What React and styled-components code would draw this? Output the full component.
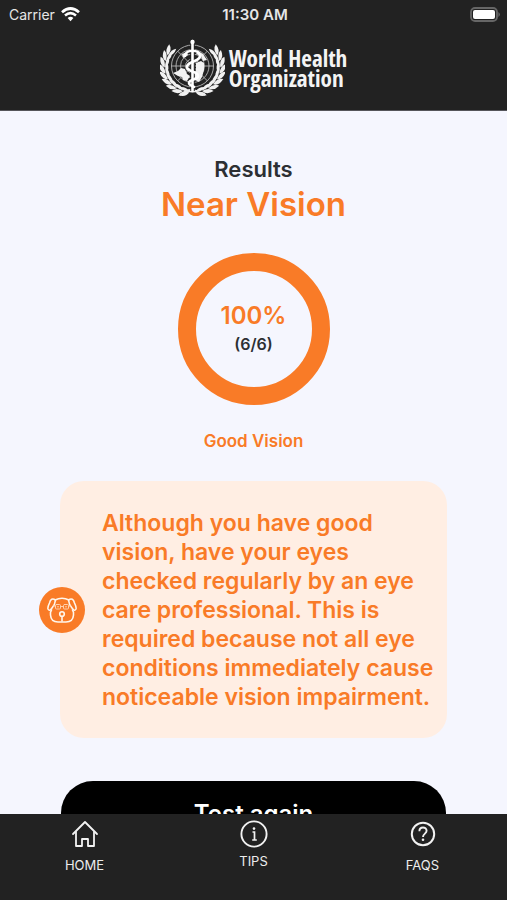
import React from "react";
import styled, { createGlobalStyle } from "styled-components";

const orange = "#f97b27";
const ink = "#222222";

const GlobalStyle = createGlobalStyle`
  *, *::before, *::after { box-sizing: border-box; }
  body {
    margin: 0;
    background: #f5f6fe;
    font-family: Inter, "Liberation Sans", sans-serif;
  }
  h1, h2, p { margin: 0; }
`;

const Screen = styled.div`
  display: flex;
  flex-direction: column;
  height: 100vh;
  background: #f5f6fe;
`;

const Header = styled.header`
  flex: none;
  background: ${ink};
  color: #fff;
  padding-bottom: 14px;
  border-bottom: 1px solid #55555a;
`;

const StatusBar = styled.div`
  display: grid;
  grid-template-columns: 1fr auto 1fr;
  align-items: center;
  height: 28px;
  padding: 0 6px 0 9px;
  font-size: 14px;
  color: #e6e6e6;
`;

const Carrier = styled.span`
  display: flex;
  align-items: center;
  gap: 6px;
`;

const Clock = styled.time`
  font-size: 15px;
  font-weight: 600;
`;

const BatteryIcon = styled.svg`
  justify-self: end;
`;

const Brand = styled.div`
  display: flex;
  justify-content: center;
  align-items: center;
  gap: 4px;
  height: 68px;
  padding-top: 12px;
`;

const BrandName = styled.span`
  font-family: "Open Sans Condensed", "Liberation Sans Narrow", "Noto Sans", sans-serif;
  font-size: 23px;
  font-weight: 700;
  line-height: 20px;
  color: #f4f4f4;
`;

const Content = styled.main`
  flex: 1;
  min-height: 0;
  overflow: hidden;
  display: flex;
  flex-direction: column;
  align-items: center;
  padding: 44px 60px 0;
`;

const Overline = styled.p`
  font-size: 22px;
  line-height: 28px;
  font-weight: 600;
  color: #2c2f33;
`;

const Title = styled.h1`
  font-size: 33px;
  line-height: 42px;
  font-weight: 600;
  color: ${orange};
`;

const Ring = styled.div`
  flex: none;
  display: flex;
  flex-direction: column;
  align-items: center;
  justify-content: center;
  gap: 2px;
  width: 152px;
  height: 152px;
  margin-top: 28px;
  border: 18px solid ${orange};
  border-radius: 50%;
`;

const Percent = styled.span`
  font-size: 24px;
  line-height: 28px;
  font-weight: 600;
  color: ${orange};
`;

const Ratio = styled.span`
  font-size: 16px;
  line-height: 24px;
  font-weight: 600;
  color: #2c2f33;
`;

const Verdict = styled.h2`
  margin-top: 24px;
  font-size: 17px;
  line-height: 24px;
  font-weight: 600;
  color: ${orange};
`;

const Advice = styled.section`
  flex: none;
  position: relative;
  align-self: stretch;
  margin-top: 28px;
  padding: 28px 12px 26px 42px;
  border-radius: 24px;
  background: #ffeee3;
`;

const AdviceText = styled.p`
  font-size: 23px;
  line-height: 29px;
  font-weight: 600;
  color: ${orange};
`;

const Mascot = styled.span`
  position: absolute;
  left: -21px;
  top: 50%;
  transform: translateY(-50%);
  display: grid;
  place-items: center;
  width: 46px;
  height: 46px;
  border-radius: 50%;
  background: ${orange};
`;

const PrimaryButton = styled.button`
  flex: none;
  width: calc(100% - 2px);
  height: 66px;
  margin-top: 43px;
  border: 0;
  border-radius: 32px;
  background: #000;
  color: #fff;
  font: 600 24px/28px Inter, "Liberation Sans", sans-serif;
`;

const TabBar = styled.nav`
  flex: none;
  display: grid;
  grid-template-columns: repeat(3, 1fr);
  height: 86px;
  padding-top: 6px;
  background: ${ink};
`;

const Tab = styled.a`
  display: flex;
  flex-direction: column;
  align-items: center;
  gap: ${(p) => (p.$tight ? "5px" : "9px")};
  font-size: 13px;
  line-height: 16px;
  color: #ececec;
  text-decoration: none;
`;

const leaves = Array.from({ length: 9 }, (_, i) => {
  const degrees = 104 + i * 14;
  const angle = (degrees * Math.PI) / 180;
  return {
    x: 32 + 27 * Math.cos(angle),
    y: 28 + 25 * Math.sin(angle),
    turn: degrees + 90,
  };
});

function Branch() {
  return (
    <g fill="#f2f2f2">
      {leaves.map((l) => (
        <g key={l.turn} transform={`translate(${l.x} ${l.y}) rotate(${l.turn})`}>
          <path d="M-4 0Q-2-6 6-5.500Q4 0-4 0Z" />
          <path d="M-4 .4Q0 5 6.500 2.800Q3-1-4 .4Z" />
        </g>
      ))}
    </g>
  );
}

function Emblem() {
  return (
    <svg width="65" height="58" viewBox="0 0 65 58" fill="none" aria-hidden="true">
      <Branch />
      <g transform="translate(65 0) scale(-1 1)">
        <Branch />
      </g>
      <path d="M20 56Q27 50 32.500 51T45 56M25 51Q31 54 40 51M40 51Q34 54 25 51" stroke="#eee" strokeWidth="1.800" />
      <g stroke="#b8b8b8" strokeWidth=".9">
        <circle cx="32.500" cy="27" r="21" />
        <circle cx="32.500" cy="27" r="16.500" />
        <circle cx="32.500" cy="27" r="12" />
        <circle cx="32.500" cy="27" r="7" />
        <path d="M11.500 27h42M32.500 6v42M17.500 12l30 30M47.500 12l-30 30" />
      </g>
      <g fill="#f2f2f2">
        <path d="M13 34l5-2 3-3 4 1 2 5 3 2-3 5-4-1-1-3-4-1z" />
        <path d="M36 24l5-2 3 2v7l-2 7-3 5-4-2-1-6 2-4z" />
        <path d="M38 12l5 3 4 6-4 1-2-5-5-2zM22 15l5-2 1 3-5 3z" />
      </g>
      <path d="M32.500 2v50" stroke={ink} strokeWidth="4.500" />
      <path d="M32.500 2v50" stroke="#fff" strokeWidth="2.600" strokeLinecap="round" />
      <circle cx="32.500" cy="3" r="2.200" fill="#fff" />
      <path
        d="M25 17c0-7 15-7 15 0 0 6-13 5-13 11 0 5 11 4 11 9 0 4-9 3-9 7 0 2 3 3 5 4"
        stroke="#fff"
        strokeWidth="2.600"
        strokeLinecap="round"
      />
    </svg>
  );
}

function WifiIcon() {
  return (
    <svg width="19" height="15" viewBox="0 0 19 15" fill="none" stroke="#fff" aria-hidden="true">
      <path d="M1 5.300Q9.500-2.300 18 5.300" strokeWidth="2.700" />
      <path d="M4 8.500Q9.500 3.700 15 8.500" strokeWidth="2.500" />
      <path d="M6.600 11.100Q9.500 8.500 12.400 11.100L9.500 14.200Z" fill="#fff" stroke="none" />
    </svg>
  );
}

function Battery() {
  return (
    <BatteryIcon width="31" height="15" viewBox="0 0 31 15" aria-label="Battery full">
      <rect x="1" y="1" width="26" height="13" rx="4" fill="none" stroke="#666" strokeWidth="1.800" />
      <rect x="3" y="3" width="22" height="9" rx="2" fill="#fff" />
      <path d="M28.500 5Q31 7.500 28.500 10Z" fill="#777" />
    </BatteryIcon>
  );
}

function DogIcon() {
  return (
    <svg width="30" height="28" viewBox="0 0 30 28" fill="none" stroke="#fff6ec" strokeWidth="1.600" strokeLinecap="round" strokeLinejoin="round" aria-hidden="true">
      <path d="M8 4Q15 .5 22 4" />
      <path d="M8.500 4Q4 1 2.500 7Q.5 11 1 13Q2.500 16 5 12Q8 9 8.500 4Z" />
      <path d="M21.500 4Q26 1 27.500 7Q29.500 11 29 13Q27.500 16 25 12Q22 9 21.500 4Z" />
      <path d="M4.500 14Q3 16 3.500 19Q4 26 11 26H19Q26 26 26.500 19Q27 16 25.500 14" />
      <circle cx="15" cy="18" r="2.300" />
      <path d="M15 20.500v4.500" />
      <g stroke="#ffd0ad" strokeWidth="1">
        <rect x="8.500" y="8.500" width="5" height="4.500" rx="1" />
        <rect x="16.500" y="8.500" width="5" height="4.500" rx="1" />
        <path d="M13.500 10.500h3M10.500 10.800h1M18.500 10.800h1M6.500 10h2M21.500 10h2" />
      </g>
    </svg>
  );
}

function HomeIcon() {
  return (
    <svg width="28" height="28" viewBox="0 0 28 28" fill="none" stroke="#f2f2f2" strokeWidth="1.800" strokeLinecap="round" strokeLinejoin="round" aria-hidden="true">
      <path d="M2 14L14 2l12 12" />
      <path d="M5 12v14h6v-7h6v7h6V12" />
    </svg>
  );
}

function TipsIcon() {
  return (
    <svg width="28" height="28" viewBox="0 0 28 28" fill="none" stroke="#f2f2f2" aria-hidden="true">
      <circle cx="14" cy="14" r="12.600" strokeWidth="1.900" />
      <path d="M12.500 12h2v8M12.200 20h4.600" strokeWidth="1.700" />
      <circle cx="14" cy="8.600" r="1.300" fill="#f2f2f2" stroke="none" />
    </svg>
  );
}

function FaqIcon() {
  return (
    <svg width="28" height="28" viewBox="0 0 28 28" fill="none" stroke="#f2f2f2" aria-hidden="true">
      <circle cx="14" cy="14" r="11.200" strokeWidth="2" />
      <path d="M10.400 11.200c0-5 7.200-4.700 7.200-.4 0 2.800-3.600 2.900-3.600 6.200" strokeWidth="1.900" />
      <circle cx="14" cy="19.800" r="1.300" fill="#f2f2f2" stroke="none" />
    </svg>
  );
}

export default function App() {
  return (
    <Screen>
      <GlobalStyle />
      <Header>
        <StatusBar>
          <Carrier>
            Carrier
            <WifiIcon />
          </Carrier>
          <Clock>11:30 AM</Clock>
          <Battery />
        </StatusBar>
        <Brand>
          <Emblem />
          <BrandName>
            World Health
            <br />
            Organization
          </BrandName>
        </Brand>
      </Header>
      <Content>
        <Overline>Results</Overline>
        <Title>Near Vision</Title>
        <Ring>
          <Percent>100%</Percent>
          <Ratio>(6/6)</Ratio>
        </Ring>
        <Verdict>Good Vision</Verdict>
        <Advice>
          <Mascot>
            <DogIcon />
          </Mascot>
          <AdviceText>
            Although you have good vision, have your eyes checked regularly by an eye care
            professional. This is required because not all eye conditions immediately cause
            noticeable vision impairment.
          </AdviceText>
        </Advice>
        <PrimaryButton type="button">Test again</PrimaryButton>
      </Content>
      <TabBar aria-label="Main">
        <Tab href="#home">
          <HomeIcon />
          HOME
        </Tab>
        <Tab href="#tips" $tight>
          <TipsIcon />
          TIPS
        </Tab>
        <Tab href="#faqs">
          <FaqIcon />
          FAQS
        </Tab>
      </TabBar>
    </Screen>
  );
}
